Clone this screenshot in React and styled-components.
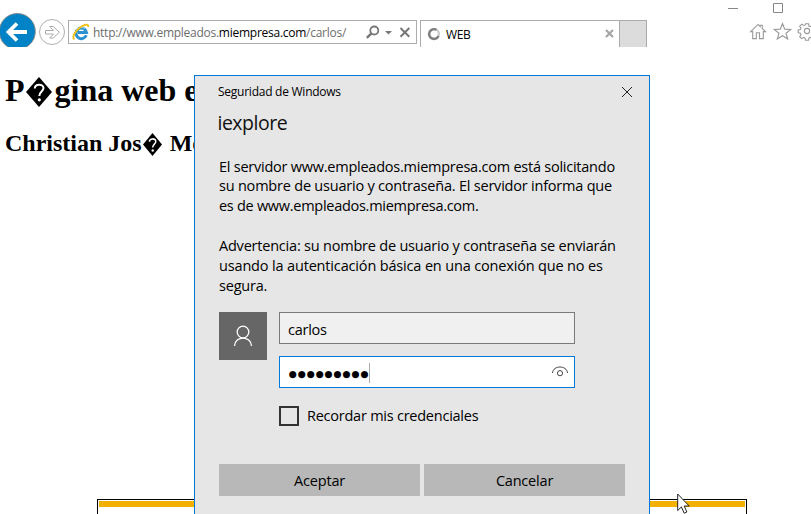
import React from "react";
import styled, { createGlobalStyle } from "styled-components";

const Global = createGlobalStyle`
  * { box-sizing: border-box; }
  body { margin: 0; background: #fff; overflow: hidden; }
`;

const UI_FONT = '"Open Sans", "Noto Sans", sans-serif';

const Window = styled.div`
  position: relative;
  display: flex;
  flex-direction: column;
  width: 811px;
  height: 514px;
  overflow: hidden;
  background: #fff;
  font-family: ${UI_FONT};
  color: #000;
`;

const Chrome = styled.header`
  display: flex;
  flex-direction: column;
  height: 47px;
  overflow: hidden;
  flex: none;
`;

const WindowControls = styled.div`
  display: flex;
  justify-content: flex-end;
  height: 13px;
  flex: none;
  padding-right: 27px;
`;

const Toolbar = styled.div`
  display: flex;
  align-items: flex-start;
  height: 38px;
  flex: none;
`;

const NavButtons = styled.div`
  width: 68px;
  flex: none;
  svg { display: block; }
`;

const AddressBar = styled.div`
  display: flex;
  align-items: center;
  width: 349px;
  height: 24px;
  margin: 7px 3px 0 0;
  padding: 0 5px 0 3px;
  border: 1px solid #acacac;
  flex: none;
  svg { flex: none; }
`;

const Line = styled.span`
  display: block;
  white-space: pre;
  font-size: ${(p) => p.$size}px;
  line-height: ${(p) => p.$height}px;
  letter-spacing: ${(p) => p.$spacing || 0}px;
`;

const Url = styled(Line)`
  flex: 1;
  margin: 1px 0 0 3px;
  color: #6d6d6d;
  b { font-weight: 400; color: #000; }
`;

const Tab = styled.div`
  display: flex;
  align-items: center;
  width: 199px;
  height: 31px;
  margin-top: 7px;
  padding: 0 5px 4px 6px;
  border: 1px solid #acacac;
  border-right: 0;
  flex: none;
`;

const TabLabel = styled(Line)`
  flex: 1;
  margin: 3px 0 0 5px;
`;

const NewTab = styled.div`
  width: 28px;
  height: 31px;
  margin-top: 7px;
  border: 1px solid #acacac;
  background: #dcdcdc;
  flex: none;
`;

const Tools = styled.div`
  display: flex;
  gap: 6px;
  margin: 9px 0 0 102px;
  flex: none;
`;

const Page = styled.main`
  display: flex;
  flex-direction: column;
  flex: 1;
  padding: 25px 0 0 5px;
  font-family: "Liberation Serif", serif;
`;

const Heading = styled.h1`
  margin: 0 0 21px;
  font-size: 32px;
  line-height: 37px;
  white-space: nowrap;
`;

const SubHeading = styled.h2`
  margin: 0;
  font-size: 24px;
  line-height: 27px;
  white-space: nowrap;
`;

const Unknown = styled.svg`
  display: inline-block;
  width: ${(p) => p.$w}px;
  height: ${(p) => p.$h}px;
  margin: 0 ${(p) => p.$gap}px 0 1.5px;
  vertical-align: ${(p) => p.$drop}px;
`;

const TableFrame = styled.div`
  width: 650px;
  height: 15px;
  margin: auto 0 0 92px;
  padding: 1px;
  border: 1px solid #000;
  border-bottom: 0;
`;

const TableHeader = styled.div`
  height: 6px;
  background: #f2b000;
`;

const Dialog = styled.section`
  position: absolute;
  left: 194px;
  top: 75px;
  display: flex;
  flex-direction: column;
  width: 456px;
  height: 445px;
  padding: 0 24px;
  border: 1px solid #0078d7;
  background: #e6e6e6;
`;

const DialogBar = styled.div`
  display: flex;
  justify-content: space-between;
  align-items: center;
  height: 32px;
  margin: 0 -8px 0 -1px;
`;

const DialogTitle = styled(Line)`
  height: 28px;
  margin: 0 0 20.5px -1.5px;
  color: #111;
`;

const Message = styled.div`
  height: 139.5px;
  margin-bottom: 16px;
`;

const Credentials = styled.div`
  display: grid;
  grid-template-columns: 48px 296px;
  column-gap: 12px;
`;

const Avatar = styled.div`
  width: 48px;
  height: 48px;
  background: #666;
`;

const Fields = styled.div`
  display: flex;
  flex-direction: column;
  gap: 12px;
`;

const Field = styled.div`
  display: flex;
  align-items: center;
  height: 32px;
  padding: ${(p) => (p.$focused ? 0 : "3px")} 5px 0 8px;
  border: 1px solid ${(p) => (p.$focused ? "#0078d7" : "#7a7a7a")};
  background: ${(p) => (p.$focused ? "#fff" : "#f0f0f0")};
`;

const Dots = styled(Line)`
  font-family: "DejaVu Sans", sans-serif;
  margin: 4px 0 0 0.5px;
`;

const Caret = styled.div`
  width: 1px;
  height: 20px;
  margin: 2px auto 0 0;
  background: #aaa;
`;

const Remember = styled.label`
  display: flex;
  align-items: center;
  gap: 8px;
  height: 20px;
  margin-top: 6px;
`;

const Checkbox = styled.span`
  width: 20px;
  height: 20px;
  border: 2px solid #333;
`;

const Actions = styled.div`
  display: grid;
  grid-template-columns: 201px 201px;
  gap: 4px;
  margin-top: 38px;
`;

const Button = styled.button`
  display: flex;
  justify-content: center;
  align-items: center;
  height: 32px;
  padding: 2px 0 0;
  border: 0;
  background: #b8b8b8;
  color: #000;
  font-family: ${UI_FONT};
`;

const Pointer = styled.svg`
  position: absolute;
  left: 677px;
  top: 493px;
`;

const message = [
  ["El servidor www.empleados.miempresa.com está solicitando", -0.24],
  ["su nombre de usuario y contraseña. El servidor informa que", -0.21],
  ["es de www.empleados.miempresa.com.", -0.28],
  [" ", 0],
  ["Advertencia: su nombre de usuario y contraseña se enviarán", -0.21],
  ["usando la autenticación básica en una conexión que no es", -0.16],
  ["segura.", -0.2],
];

const UnknownGlyph = (props) => (
  <Unknown viewBox="0 0 26 30" preserveAspectRatio="none" {...props}>
    <path d="M13 0 26 15 13 30 0 15Z" />
    <path d="M8.800 11.500C8.800 6.500 17.500 6.500 17.500 11c0 3.500-4.200 3.600-4.200 8" fill="none" stroke="#fff" strokeWidth="2" />
    <circle cx="13.300" cy="22.800" r="1.600" fill="#fff" />
  </Unknown>
);

const NavIcons = () => (
  <svg width="68" height="38" viewBox="0 13 68 38">
    <circle cx="17.300" cy="31.500" r="18" fill="#0083c6" stroke="#8c8c8c" />
    <path d="M27 32H9.500M17 23.500 8.500 32l8.500 8.500" fill="none" stroke="#fff" strokeWidth="3.800" />
    <circle cx="52" cy="32" r="12.500" fill="#fff" stroke="#b0b0b0" />
    <path d="M45.500 30.500h8l-3.800-4h3.500l6.200 5.800-6.200 5.700h-3.500l3.800-4h-8z" fill="#fff" stroke="#acacac" />
  </svg>
);

const IeIcon = () => (
  <svg width="18" height="18" viewBox="0 0 18 18">
    <path d="M14.300 12.300A5.300 5.300 0 1 1 14.600 9.600H6" fill="none" stroke="#2b91d0" strokeWidth="3" />
    <path d="M13 5.800A5.300 5.300 0 0 0 4.500 7.500" fill="none" stroke="#7dd0f5" strokeWidth="1.200" />
    <path d="M2.500 16.300C-.5 15 2.500 8.500 8 4.500 12 1.500 16.500.2 16.300 4" fill="none" stroke="#f3c015" strokeWidth="1.900" />
  </svg>
);

const AddressIcons = () => (
  <svg width="46" height="20" viewBox="365 22 46 20" fill="none" stroke="#777">
    <circle cx="374.300" cy="30.500" r="4" strokeWidth="1.800" />
    <path d="m371.400 33.500-4.600 4.300" strokeWidth="2.400" />
    <path d="M385 31h7l-3.500 3.600z" fill="#777" stroke="none" />
    <path d="m400.500 28 8.800 8.800m0-8.800-8.800 8.800" strokeWidth="2" />
  </svg>
);

const ToolIcons = () => (
  <svg width="62" height="20" viewBox="749 22 62 20" fill="none" stroke="#999" strokeWidth="1.100">
    <path d="m750.700 31.600 7.300-7.200 2.200 2v-1.200h2v3.200l3.300 3.200h-2.200v7h-3.800v-5.800h-3.200v5.800h-3.600v-7z" />
    <path d="m782.500 23.500 2.200 5.600 6 .4-4.700 3.700 1.700 5.800-5.200-3.300-5.200 3.300 1.700-5.800-4.700-3.700 6-.4z" />
    <circle cx="807" cy="31" r="2.600" />
    <path d="m805.500 23.800h3l.4 2.200 1.500.6 1.900-1.300 2 2-1.300 1.900.6 1.500v2.800l-.8 1.500 1.300 1.600-2 2-1.900-1.200-1.300.7-.4 2.200h-3l-.4-2.200-1.500-.7-1.900 1.200-2-2 1.300-1.900-.6-1.500-2.200-.4v-2.800l2.200-.4.6-1.500-1.300-1.900 2-2 1.900 1.300 1.500-.6z" />
  </svg>
);

export default function App() {
  return (
    <Window>
      <Global />
      <Chrome>
        <WindowControls>
          <svg width="60" height="13" viewBox="724 0 60 13" fill="none" stroke="#888">
            <path d="M728 8.500h10M773.500 3.500h9v9h-9z" />
          </svg>
        </WindowControls>
        <Toolbar>
          <NavButtons><NavIcons /></NavButtons>
          <AddressBar>
            <IeIcon />
            <Url $size={12} $height={20} $spacing={-0.26}>http://www.empleados.<b>miempresa.com</b>/carlos/</Url>
            <AddressIcons />
          </AddressBar>
          <Tab>
            <svg width="14" height="14" viewBox="0 0 14 14" fill="none" strokeWidth="2.400">
              <circle cx="7" cy="7" r="4.900" stroke="#ccc" />
              <path d="M9.500 2.800A4.900 4.900 0 1 0 11.500 9" stroke="#808080" />
            </svg>
            <TabLabel $size={12} $height={18} $spacing={-0.4}>WEB</TabLabel>
            <svg width="9" height="9" viewBox="0 0 9 9" stroke="#a5a5a5" strokeWidth="2.200">
              <path d="m1 1 7 7m0-7-7 7" />
            </svg>
          </Tab>
          <NewTab />
          <Tools><ToolIcons /></Tools>
        </Toolbar>
      </Chrome>

      <Page>
        <Heading>P<UnknownGlyph $w={26} $h={30} $gap={2.5} $drop={-6} />gina web e</Heading>
        <SubHeading>Christian Jos<UnknownGlyph $w={19} $h={23} $gap={1.5} $drop={-5} /> Mo</SubHeading>
        <TableFrame><TableHeader /></TableFrame>
      </Page>

      <Dialog>
        <DialogBar>
          <Line $size={12} $height={16} $spacing={-0.25}>Seguridad de Windows</Line>
          <svg width="12" height="12" viewBox="0 0 12 12" stroke="#222">
            <path d="m1 1 10 10m0-10L1 11" />
          </svg>
        </DialogBar>
        <DialogTitle $size={19.5} $height={29} $spacing={-0.5}>iexplore</DialogTitle>
        <Message>
          {message.map(([text, spacing], i) => (
            <Line key={i} $size={14.5} $height={19.9} $spacing={spacing}>{text}</Line>
          ))}
        </Message>
        <Credentials>
          <Avatar>
            <svg width="48" height="48" viewBox="0 0 48 48" fill="none" stroke="#fff" strokeWidth="1.300">
              <circle cx="24" cy="20" r="5.800" />
              <path d="M15.500 34c.5-10.500 16.500-10.500 17 0" />
            </svg>
          </Avatar>
          <Fields>
            <Field><Line $size={14.5} $height={20} $spacing={-0.25}>carlos</Line></Field>
            <Field $focused>
              <Dots $size={9.3} $height={16} $spacing={0.85}>●●●●●●●●●</Dots>
              <Caret />
              <svg width="18" height="14" viewBox="0 0 18 14" fill="none" stroke="#444">
                <path d="M1.500 8C2 0 16 0 16.500 8" />
                <circle cx="9" cy="8.200" r="2.600" />
              </svg>
            </Field>
            <Remember>
              <Checkbox />
              <Line $size={14.5} $height={20} $spacing={-0.24}>Recordar mis credenciales</Line>
            </Remember>
          </Fields>
        </Credentials>
        <Actions>
          <Button><Line $size={14.5} $height={20} $spacing={-0.15}>Aceptar</Line></Button>
          <Button><Line $size={14.5} $height={20} $spacing={-0.2}>Cancelar</Line></Button>
        </Actions>
      </Dialog>

      <Pointer width="13" height="21" viewBox="0 0 13 21">
        <path d="M.7 1v16.500l3.700-3.600 2.800 6.300 2.700-1.200L7.200 13h5z" fill="#fff" stroke="#222" />
      </Pointer>
    </Window>
  );
}
